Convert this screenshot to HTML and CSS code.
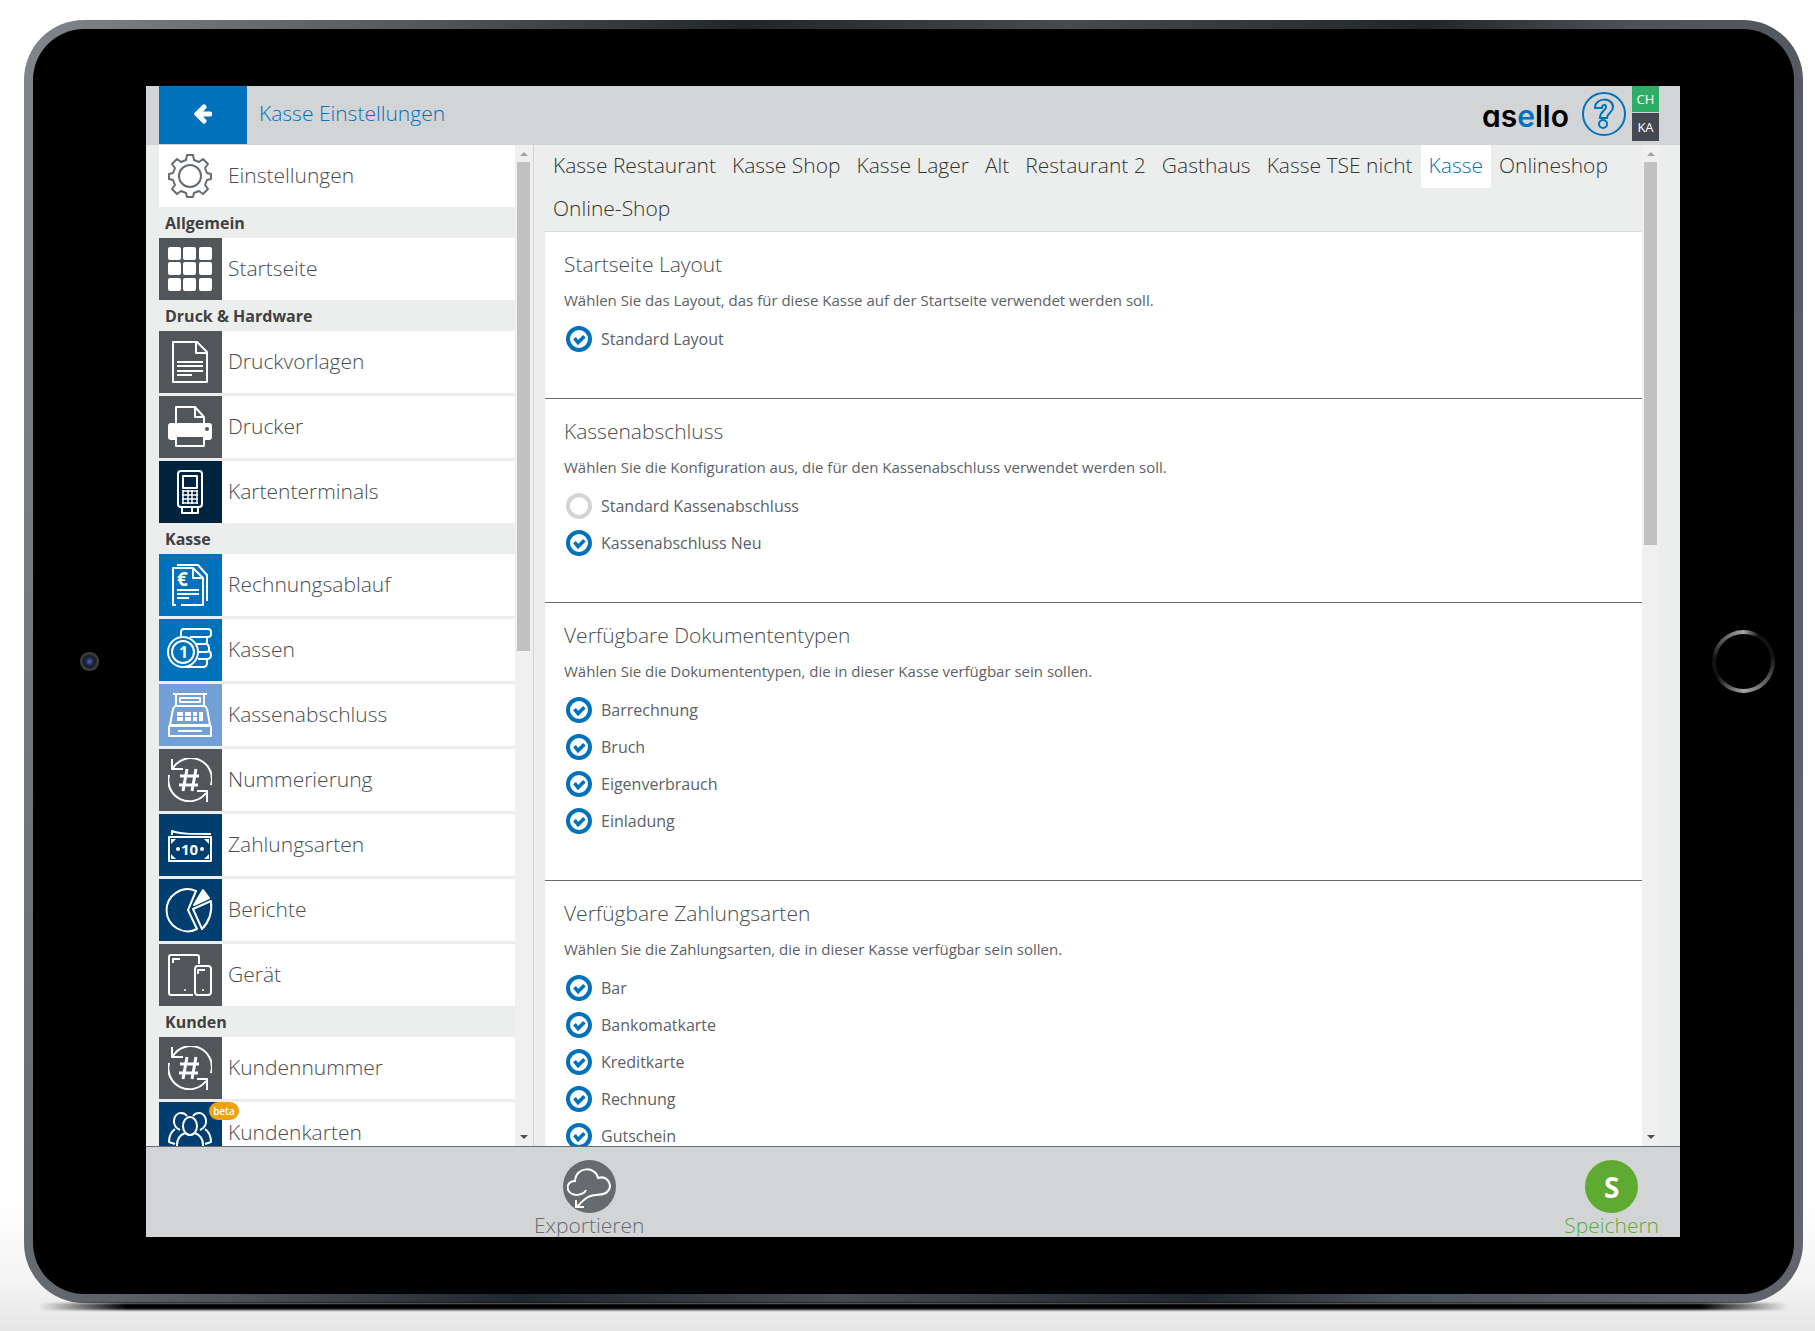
FILE: index.html
```html
<!DOCTYPE html>
<html lang="de">
<head>
  <meta charset="utf-8">
  <title>Kasse Einstellungen</title>
  <link rel="stylesheet" href="styles.css">
</head>
<body>
  <!-- shared icons -->
  <svg class="sprite" aria-hidden="true">
    <symbol id="icon-number" viewBox="0 0 44 44">
      <path d="M1 17A21 21 0 0 0 38 35M43 27A21 21 0 0 0 5 10" />
      <path d="M4 1v10h11M29 33h10v11" />
      <path d="M19 11l-4 22M28 11l-4 22M12 18h19M11 27h19" stroke-width="3" />
    </symbol>
  </svg>

  <div class="device">
    <div class="camera"></div>
    <div class="screen">
      <header class="topbar">
        <button class="back" aria-label="Zurück">
          <svg width="18" height="20" viewBox="0 0 18 20"><path d="M10 3L3 10l7 7M4 10h12" fill="none" stroke="#fff" stroke-width="5" stroke-linecap="round" /></svg>
        </button>
        <h1>Kasse Einstellungen</h1>
        <div class="logo">as<span>e</span>llo</div>
        <button class="help" aria-label="Hilfe">
          <svg width="44" height="44" viewBox="0 0 44 44">
            <circle cx="22" cy="22" r="21" />
            <path d="M13 16c0-11 18-11 18-1 0 6-6 6-6 11h-7c0-7 6-7 6-11 0-3-4-3-4 1z" />
            <circle cx="21" cy="32" r="4" />
          </svg>
        </button>
        <div class="users">
          <span class="user-ch">CH</span>
          <span class="user-ka">KA</span>
        </div>
      </header>

      <div class="main">
        <nav class="sidebar">
          <a href="#" class="item">
            <span class="icon plain"><svg viewBox="0 0 44 44"><path d="M18 6l1-5h6l1 5 5 2 4-3 5 5-3 4 2 5 4 1v5l-4 1-2 5 3 4-5 5-4-3-5 2-1 4h-6l-1-4-5-2-4 3-5-5 3-4-2-5-4-1v-5l4-1 2-5-3-4 5-5 4 3z" /><circle cx="22" cy="22" r="11" /></svg></span>
            Einstellungen
          </a>
          <h2>Allgemein</h2>
          <a href="#" class="item">
            <span class="icon grey"><svg viewBox="0 0 44 44"><g fill="#fff" stroke="none"><rect width="13" height="13" rx="2" /><rect x="15" width="13" height="13" rx="2" /><rect x="31" width="13" height="13" rx="2" /><rect y="15" width="13" height="13" rx="2" /><rect x="15" y="15" width="13" height="13" rx="2" /><rect x="31" y="15" width="13" height="13" rx="2" /><rect y="31" width="13" height="13" rx="2" /><rect x="15" y="31" width="13" height="13" rx="2" /><rect x="31" y="31" width="13" height="13" rx="2" /></g></svg></span>
            Startseite
          </a>
          <h2>Druck &amp; Hardware</h2>
          <a href="#" class="item">
            <span class="icon grey"><svg viewBox="0 0 44 44"><path d="M5 2h24l10 10v30H5zM28 2v11h11M9 22h26M9 26h26M9 31h26M9 35h15" /></svg></span>
            Druckvorlagen
          </a>
          <a href="#" class="item">
            <span class="icon grey"><svg viewBox="0 0 44 44"><path d="M8 19V2h19l9 10v8M27 2v10h9" /><path d="M3 18h38a3 3 0 0 1 3 3v11a3 3 0 0 1-3 3h-5v-4H8v4H3a3 3 0 0 1-3-3V21a3 3 0 0 1 3-3z" fill="#fff" stroke="none" /><path d="M8 31h28v10H8z" /><circle cx="39" cy="24" r="2" fill="#51565a" stroke="none" /></svg></span>
            Drucker
          </a>
          <a href="#" class="item">
            <span class="icon night"><svg viewBox="0 0 44 44"><rect x="10" y="1" width="24" height="36" rx="3" /><rect x="15" y="6" width="14" height="12" /><path d="M14 21h16M14 25h16M14 29h16M14 33h16M15 20v14M20 20v14M24 20v14M29 20v14" stroke-width="1.5" /><path d="M14 37v6h16v-6M24 37v6" /></svg></span>
            Kartenterminals
          </a>
          <h2>Kasse</h2>
          <a href="#" class="item">
            <span class="icon blue"><svg viewBox="0 0 44 44"><path d="M8 42H5V5h20l10 10v27H13M25 5v10h10M9 2h21l9 10v26M9 27h22M9 31h22M9 35h12" /><text x="9" y="23" font-size="19">€</text></svg></span>
            Rechnungsablauf
          </a>
          <a href="#" class="item">
            <span class="icon blue"><svg viewBox="0 0 44 44"><circle cx="15" cy="24" r="15" /><circle cx="15" cy="24" r="11" /><path d="M13 8V4q0-3 3-3h24q3 0 3 3v2q0 3-3 3H22M39 9v5q0 2-2 2H28M39 16q2 1 2 4v2q0 2-3 2h-7M41 23q2 1 2 4 0 4-4 4h-9M39 31v4q0 4-4 4H16" /><text x="11" y="30" font-size="16">1</text></svg></span>
            Kassen
          </a>
          <a href="#" class="item">
            <span class="icon light"><svg viewBox="0 0 44 44"><path d="M5 1h34M8 1v12M36 1v12M12 5h20v4H12zM7 13h30l2 3 3 16H2l3-16zM1 33h42v10H1zM10 38h24" /><path d="M9 21h6M17 21h6M25 21h4M9 26h6M17 26h6M25 26h4M33 19v9" stroke-width="4" /></svg></span>
            Kassenabschluss
          </a>
          <a href="#" class="item">
            <span class="icon grey"><svg><use href="#icon-number" /></svg></span>
            Nummerierung
          </a>
          <a href="#" class="item">
            <span class="icon navy"><svg viewBox="0 0 44 44"><path d="M1 14h42v24H1z" /><path d="M4 12V8c8 3 18 3 39 3" /><g fill="#fff" stroke="none"><path d="M3 16h5l-5 5zM41 16h-5l5 5zM3 36h5l-5-5zM41 36h-5l5-5z" /><circle cx="10" cy="26" r="2" /><circle cx="34" cy="26" r="2" /></g><text x="13" y="32" font-size="15">10</text></svg></span>
            Zahlungsarten
          </a>
          <a href="#" class="item">
            <span class="icon navy"><svg viewBox="0 0 44 44"><path d="M28 3A21 21 0 1 0 29 41L20 22zM25 21l18-8q2 17-9 28z" /><path d="M26 17l9-15 6 8z" fill="#fff" /></svg></span>
            Berichte
          </a>
          <a href="#" class="item">
            <span class="icon grey"><svg viewBox="0 0 44 44"><path d="M31 11V4q0-2-2-2H3Q1 2 1 4v36q0 2 2 2h22M5 10V6h7M30 21v-4h7" /><rect x="27" y="13" width="16" height="29" rx="3" /><circle cx="17" cy="37" r="1" fill="#fff" stroke="none" /><circle cx="35" cy="37" r="1" fill="#fff" stroke="none" /></svg></span>
            Gerät
          </a>
          <h2>Kunden</h2>
          <a href="#" class="item">
            <span class="icon grey"><svg><use href="#icon-number" /></svg></span>
            Kundennummer
          </a>
          <a href="#" class="item">
            <span class="icon navy"><svg viewBox="0 0 44 44"><ellipse cx="22" cy="15" rx="7" ry="9" /><path d="M12 19C2 14 6 2 13 2q4 0 6 3M32 19c10-5 6-17-1-17q-4 0-6 3M7 18C3 21 1 25 1 31l6 2M37 18c4 3 6 7 6 13l-6 2M9 34c0-7 3-10 8-12q5 4 10 0c5 2 8 5 8 12v6H9z" /></svg><b class="beta">beta</b></span>
            Kundenkarten
          </a>
        </nav>
        <div class="scrollbar"><i class="up"></i><div class="thumb thumb-long"></div><i class="down"></i></div>

        <div class="content">
          <div class="tabs">
            <a href="#">Kasse Restaurant</a>
            <a href="#">Kasse Shop</a>
            <a href="#">Kasse Lager</a>
            <a href="#">Alt</a>
            <a href="#">Restaurant 2</a>
            <a href="#">Gasthaus</a>
            <a href="#">Kasse TSE nicht</a>
            <a href="#" class="active">Kasse</a>
            <a href="#">Onlineshop</a>
            <a href="#">Online-Shop</a>
          </div>

          <section>
            <h3>Startseite Layout</h3>
            <p>Wählen Sie das Layout, das für diese Kasse auf der Startseite verwendet werden soll.</p>
            <label><input type="radio" name="layout" checked>Standard Layout</label>
          </section>
          <section>
            <h3>Kassenabschluss</h3>
            <p>Wählen Sie die Konfiguration aus, die für den Kassenabschluss verwendet werden soll.</p>
            <label><input type="radio" name="abschluss">Standard Kassenabschluss</label>
            <label><input type="radio" name="abschluss" checked>Kassenabschluss Neu</label>
          </section>
          <section>
            <h3>Verfügbare Dokumententypen</h3>
            <p>Wählen Sie die Dokumententypen, die in dieser Kasse verfügbar sein sollen.</p>
            <label><input type="checkbox" checked>Barrechnung</label>
            <label><input type="checkbox" checked>Bruch</label>
            <label><input type="checkbox" checked>Eigenverbrauch</label>
            <label><input type="checkbox" checked>Einladung</label>
          </section>
          <section>
            <h3>Verfügbare Zahlungsarten</h3>
            <p>Wählen Sie die Zahlungsarten, die in dieser Kasse verfügbar sein sollen.</p>
            <label><input type="checkbox" checked>Bar</label>
            <label><input type="checkbox" checked>Bankomatkarte</label>
            <label><input type="checkbox" checked>Kreditkarte</label>
            <label><input type="checkbox" checked>Rechnung</label>
            <label><input type="checkbox" checked>Gutschein</label>
          </section>
        </div>
        <div class="scrollbar"><i class="up"></i><div class="thumb"></div><i class="down"></i></div>
      </div>

      <footer class="actions">
        <button class="export">
          <span class="circle"><svg width="44" height="44" viewBox="0 0 44 44"><path d="M19 25c-1 3-6 5-10 5-11-1-11-14-1-14C9 1 29 1 31 13c9-3 15 7 10 13-5 6-12 2-20 6q-5 3-11 10M9 35v7h8" /></svg></span>
          Exportieren
        </button>
        <button class="save">
          <span class="circle">S</span>
          Speichern
        </button>
      </footer>
    </div>
    <div class="home"></div>
  </div>
  <div class="shadow"></div>
</body>
</html>
```
FILE: styles.css
```css
* {
  box-sizing: border-box;
}

body {
  display: flex;
  flex-direction: column;
  height: 100vh;
  margin: 0;
  padding: 20px 12px 0 24px;
  overflow: hidden;
  background: linear-gradient(to top, #e6e6e6, #f4f4f4 50px, #fff 130px);
  font-family: "Open Sans", "Noto Sans", sans-serif;
  font-weight: 300;
  color: #484d51;
}

a {
  color: inherit;
  text-decoration: none;
}

button {
  padding: 0;
  border: 0;
  background: none;
  font: inherit;
  color: inherit;
  cursor: pointer;
}

h1, h2, h3, p {
  margin: 0;
  font-weight: 300;
}

svg {
  display: block;
}

.sprite {
  position: absolute;
  width: 0;
  height: 0;
}

/* tablet */
.device {
  flex: 1;
  min-height: 0;
  display: grid;
  grid-template-columns: 113px 1fr 114px;
  align-items: center;
  justify-items: center;
  padding: 57px 0;
  border: 9px solid transparent;
  border-radius: 60px;
  background:
    linear-gradient(#000, #000) padding-box,
    linear-gradient(100deg, #80868b, #51575d 20%, #1f262b 36%, #454b51 52%, #1f262b 70%, #4b5158 80%, #62656d) border-box;
}

.shadow {
  flex: none;
  height: 7px;
  margin: 0 15px 21px;
  background: linear-gradient(to right, transparent, #000 5%, #000 95%, transparent);
  filter: blur(1px);
}

.camera {
  width: 19px;
  height: 19px;
  border-radius: 50%;
  background: radial-gradient(circle, #5468a8, #16244f 30%, #1d1d20 42%, #4a4a4d 70%);
}

.home {
  justify-self: end;
  width: 63px;
  height: 63px;
  margin-right: 19px;
  border: 4px solid transparent;
  border-radius: 50%;
  background:
    linear-gradient(#000, #000) padding-box,
    conic-gradient(#a5a5aa, #111 30deg, #111 80deg, #a5a5aa 180deg, #111 240deg, #111 275deg, #a5a5aa) border-box;
}

.screen {
  display: flex;
  flex-direction: column;
  justify-self: stretch;
  height: 100%;
  min-height: 0;
  overflow: hidden;
  background: #eceeed;
}

/* top bar */
.topbar {
  flex: none;
  display: flex;
  align-items: center;
  height: 59px;
  padding: 0 21px 0 13px;
  background: #d3d4d6;
}

.back {
  display: grid;
  place-items: center;
  width: 88px;
  height: 58px;
  margin-bottom: 1px;
  padding-bottom: 2px;
  background: #0072bc;
}

.topbar h1 {
  flex: 1;
  margin-left: 12px;
  padding-bottom: 6px;
  font-size: 21px;
  color: #0072bc;
}

.logo {
  margin-right: 13px;
  font-family: Inter, sans-serif;
  font-size: 30px;
  font-weight: 600;
  font-feature-settings: "cv11";
  color: #000;
}

.logo span {
  color: #0072bc;
}

.help {
  margin: 0 6px 4px 0;
}

.help svg {
  fill: none;
  stroke: #0072bc;
  stroke-width: 2;
}

.users {
  align-self: flex-start;
  display: grid;
  gap: 1px;
  font-size: 13px;
  font-weight: 400;
  text-align: center;
  color: #fff;
}

.users span {
  width: 27px;
}

.user-ch {
  line-height: 26px;
  background: #2fac66;
}

.user-ka {
  line-height: 28px;
  background: #434851;
}

.main {
  flex: 1;
  display: flex;
  min-height: 0;
  padding: 0 21px 0 13px;
}

/* sidebar */
.sidebar {
  flex: none;
  width: 356px;
  overflow: hidden;
}

.sidebar h2 {
  height: 31px;
  padding-left: 6px;
  font-size: 16px;
  font-weight: 700;
  line-height: 33px;
  color: #414141;
}

.item {
  display: flex;
  gap: 6px;
  height: 62px;
  background: #fff;
  font-size: 21px;
  line-height: 60px;
}

.item + .item {
  margin-top: 3px;
}

.icon {
  position: relative;
  width: 63px;
  padding: 9px;
}

.icon svg {
  width: 44px;
  height: 44px;
  overflow: visible;
  fill: none;
  stroke: #fff;
  stroke-width: 2;
  stroke-linejoin: round;
}

.icon text {
  fill: #fff;
  stroke: none;
  font-weight: 700;
}

.plain svg {
  stroke: #666b6f;
}

.grey {
  background: #51565a;
}

.night {
  background: #00233f;
}

.blue {
  background: #0072bc;
}

.light {
  background: #729fd6;
}

.navy {
  background: #003e6f;
}

.beta {
  position: absolute;
  top: 0;
  left: 50px;
  width: 30px;
  border-radius: 9px;
  background: #f0a10e;
  font-size: 10px;
  font-weight: 600;
  line-height: 18px;
  text-align: center;
  color: #fff;
}

/* scrollbars */
.scrollbar {
  flex: none;
  display: flex;
  flex-direction: column;
  align-items: center;
  width: 17px;
  padding: 7px 0;
  background: #f0f0f0;
}

.thumb {
  width: 13px;
  height: 383px;
  margin: 6px 0 auto;
  background: #c1c1c1;
}

.thumb-long {
  height: 489px;
}

.up, .down {
  border: 4px solid transparent;
}

.up {
  border-top: 0;
  border-bottom-color: #a3a3a3;
}

.down {
  border-bottom: 0;
  border-top-color: #505050;
}

/* content */
.content {
  flex: 1;
  margin-left: 1px;
  padding-left: 11px;
  border-left: 1px solid #d3d4d6;
  overflow: hidden;
}

.tabs {
  display: flex;
  flex-wrap: wrap;
  border-bottom: 1px solid #dadcdc;
  font-size: 21px;
  line-height: 41px;
  color: #333;
}

.tabs a {
  padding: 0 8px 2px;
}

.tabs .active {
  background: #fff;
  color: #0072bc;
}

section {
  padding: 18px 19px 41px;
  border-bottom: 1px solid #666b6f;
  background: #fff;
}

section h3 {
  font-size: 21px;
  line-height: 28px;
}

section p {
  margin: 12px 0 10px;
  font-size: 15px;
  font-weight: 400;
  line-height: 20px;
  color: #5c6165;
}

section label {
  display: flex;
  align-items: center;
  gap: 9px;
  height: 37px;
  font-size: 16px;
  font-weight: 400;
  color: #5c6165;
}

section input {
  appearance: none;
  width: 26px;
  height: 26px;
  margin: 0 0 0 2px;
  border: 4px solid #d3d4d6;
  border-radius: 50%;
}

section input:checked {
  border-color: #0072bc;
  background: url("data:image/svg+xml,%3Csvg xmlns='http://www.w3.org/2000/svg' viewBox='0 0 20 20'%3E%3Cpath d='M5 9l4 5 7-7' fill='none' stroke='%230072bc' stroke-width='4'/%3E%3C/svg%3E") center / 18px;
}

/* footer */
.actions {
  flex: none;
  display: flex;
  justify-content: space-between;
  height: 91px;
  padding: 13px 21px 0 388px;
  border-top: 1px solid #666b6f;
  background: #d3d4d6;
  font-size: 21px;
  line-height: 24px;
}

.actions button {
  display: flex;
  flex-direction: column;
  align-items: center;
  justify-content: flex-start;
}

.circle {
  flex: none;
  display: grid;
  place-items: center;
  width: 53px;
  height: 53px;
  border-radius: 50%;
  font-size: 28px;
  font-weight: 700;
  color: #fff;
}

.circle svg {
  fill: none;
  stroke: #fff;
  stroke-width: 2;
}

.export {
  color: #666b6f;
}

.export .circle {
  background: #666b6f;
}

.save {
  color: #5faa31;
}

.save .circle {
  background: #5faa31;
}
```
